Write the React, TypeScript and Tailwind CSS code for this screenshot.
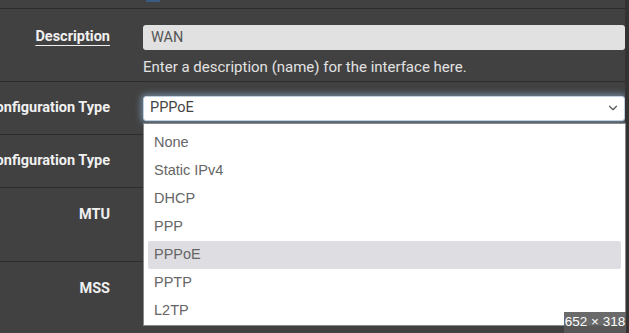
import { ChevronDown } from "lucide-react";

const options = ["None", "Static IPv4", "DHCP", "PPP", "PPPoE", "PPTP", "L2TP"];

const Label = ({ text, underline }: { text: string; underline?: boolean }) => (
  <div className="flex w-[126px] shrink-0 justify-end overflow-visible whitespace-nowrap pr-[16px]">
    <span
      className={
        "text-[14.5px] font-bold text-[#f0f0f0] " +
        (underline ? "underline decoration-1 underline-offset-[4px]" : "")
      }>
      {text}
    </span>
  </div>
);

const App = () => {
  return (
    <div
      className="relative h-[333px] w-[629px] overflow-hidden bg-[#414141]"
      style={{ fontFamily: "Roboto, 'Liberation Sans', sans-serif" }}>
      <div className="flex h-full w-[625px] flex-col">
        <div className="h-[9px] shrink-0 border-b border-[#2c2c2c]">
          <div className="ml-[146px] h-[2px] w-[14px] bg-[#3a5a80]" />
        </div>

        {/* Description */}
        <div className="flex h-[73px] shrink-0 border-b border-[#2c2c2c] pt-[16px]">
          <div className="pt-[1px]">
            <Label text="Description" underline />
          </div>
          <div className="ml-[17px] flex flex-1 flex-col">
            <div className="flex h-[25px] items-center rounded-[3px] bg-[#e1e1e1] px-[8px] text-[14.5px] text-[#555]">
              WAN
            </div>
            <div className="mt-[6px] text-[15px] text-[#e2e2e2]">
              Enter a description (name) for the interface here.
            </div>
          </div>
        </div>

        {/* IPv4 */}
        <div className="flex h-[53px] shrink-0 items-center border-b border-[#2c2c2c]">
          <Label text="IPv4 Configuration Type" />
          <div className="relative ml-[17px] flex h-[25px] flex-1 items-center justify-between rounded-[3px] border border-[#bfcfe0] bg-white pl-[6px] pr-[4px] text-[14.5px] text-[#444] shadow-[0_0_6px_2px_rgba(150,190,230,0.55)]">
            <span>PPPoE</span>
            <ChevronDown size={14} strokeWidth={2} className="text-[#555]" />
          </div>
        </div>

        {/* IPv6 */}
        <div className="flex h-[53px] shrink-0 items-center border-b border-[#2c2c2c]">
          <Label text="IPv6 Configuration Type" />
        </div>

        {/* MTU */}
        <div className="flex h-[74px] shrink-0 border-b border-[#2c2c2c] pt-[16px]">
          <Label text="MTU" />
        </div>

        {/* MSS */}
        <div className="flex flex-1 pt-[16px]">
          <Label text="MSS" />
        </div>
      </div>

      {/* right edge */}
      <div className="absolute right-0 top-0 h-full w-[4px] bg-[#333]" />

      {/* open select list */}
      <div
        className="absolute left-[143px] top-[123px] w-[483px] border border-[#8a8a8a] bg-white px-[4px] pt-[5px]"
        style={{ fontFamily: "'Liberation Sans', Arial, sans-serif" }}>
        {options.map((o) => (
          <div
            key={o}
            className={
              "flex h-[28px] items-center px-[6px] text-[14.5px] text-[#666] " +
              (o === "PPPoE" ? "rounded-[2px] bg-[#dedee2] text-[#333]" : "")
            }>
            {o}
          </div>
        ))}
      </div>

      {/* size badge */}
      <div
        className="absolute bottom-0 left-[564px] flex h-[21px] w-[62px] items-center justify-center whitespace-nowrap bg-[#5a5a5a]/90 text-[13.5px] text-white"
        style={{ fontFamily: "'Liberation Sans', Arial, sans-serif" }}>
        652 × 318
      </div>
    </div>
  );
};

export default App;
